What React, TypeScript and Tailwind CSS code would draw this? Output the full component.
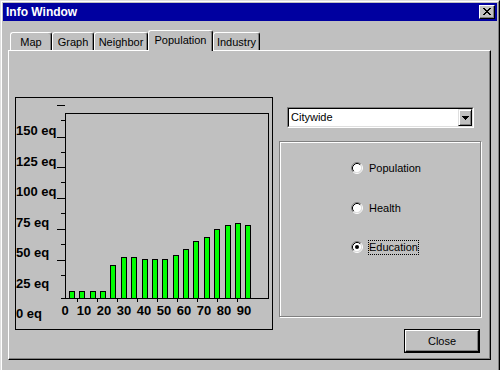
import React from 'react';

const tabs = [
  { label: 'Map', w: 'w-[42px]', active: false },
  { label: 'Graph', w: 'w-[42px]', active: false },
  { label: 'Neighbor', w: 'w-[54px]', active: false },
  { label: 'Population', w: 'w-[65px]', active: true },
  { label: 'Industry', w: 'w-[47px]', active: false },
];

// bar tops in screen px, bottom sits on the x axis at y=298
const bars = [291, 291, 291, 291, 265, 257, 257, 259, 259, 259, 255, 249, 241, 237, 229, 225, 223, 225];
const longTicks = [105, 137, 167, 198, 229, 260];
const shortTicks = [120, 152, 182, 213, 244, 275];
const yLabels = ['150 eq', '125 eq', '100 eq', '75 eq', '50 eq', '25 eq', '0 eq'];
const xLabels = ['0', '10', '20', '30', '40', '50', '60', '70', '80', '90'];
const xTicks = [77, 97, 117, 137, 157, 177, 197, 217, 237];

const CloseGlyph: React.FC = () => (
  <svg width="8" height="7" viewBox="0 0 8 7" shapeRendering="crispEdges">
    <path
      d="M0 0h2v1h-2zM6 0h2v1h-2zM1 1h2v1h-2zM5 1h2v1h-2zM2 2h4v1h-4zM3 3h2v1h-2zM2 4h4v1h-4zM1 5h2v1h-2zM5 5h2v1h-2zM0 6h2v1h-2zM6 6h2v1h-2z"
      fill="#000"
    />
  </svg>
);

const Radio: React.FC<{ checked?: boolean }> = ({ checked }) => (
  <svg width="12" height="12" viewBox="0 0 12 12" className="shrink-0">
    <circle cx="6" cy="6" r="4.5" fill="#fff" />
    <path d="M2.11 9.89A5.5 5.5 0 0 1 9.89 2.11" fill="none" stroke="#808080" />
    <path d="M9.89 2.11A5.5 5.5 0 0 1 2.11 9.89" fill="none" stroke="#fff" />
    <path d="M2.82 9.18A4.5 4.5 0 0 1 9.18 2.82" fill="none" stroke="#000" />
    <path d="M9.18 2.82A4.5 4.5 0 0 1 2.82 9.18" fill="none" stroke="#dfdfdf" />
    {checked && <circle cx="6" cy="6" r="2" fill="#000" />}
  </svg>
);

const Chart: React.FC = () => (
  <div className="w-[258px] h-[233px] border border-black shrink-0">
    <svg width={256} height={231} className="block">
      <g transform="translate(-16 -98)">
        <g shapeRendering="crispEdges" stroke="#000">
          <rect x={65.5} y={113.5} width={203} height={185} fill="none" />
          <line x1={61} y1={298.5} x2={66} y2={298.5} />
          {longTicks.map((y) => (
            <line key={y} x1={57} y1={y + 0.5} x2={65} y2={y + 0.5} />
          ))}
          {shortTicks.map((y) => (
            <line key={y} x1={61} y1={y + 0.5} x2={65} y2={y + 0.5} />
          ))}
          {xTicks.map((x) => (
            <line key={x} x1={x + 0.5} y1={299} x2={x + 0.5} y2={302} />
          ))}
          {bars.map((top, i) => {
            const x = Math.round(69 + i * 10.37);
            return (
              <rect key={i} x={x + 0.5} y={top + 0.5} width={5} height={298 - top} fill="#00ff00" />
            );
          })}
        </g>
        <g fontFamily="'Liberation Sans', Arial, sans-serif" fontWeight="bold" fontSize="13" fill="#000">
          {yLabels.map((t, k) => (
            <text key={t} x={16} y={135 + k * 30.5}>
              {t}
            </text>
          ))}
          {xLabels.map((t, k) => (
            <text key={t} x={k === 0 ? 65 : 84 + (k - 1) * 20} y={315} textAnchor="middle">
              {t}
            </text>
          ))}
        </g>
      </g>
    </svg>
  </div>
);

export default function App() {
  return (
    <div className="w-[500px] h-[370px] overflow-hidden font-['Liberation_Sans',Arial,sans-serif] text-[11px] text-black">
      <div className="w-[500px] h-[374px] bg-[#c0c0c0] border border-t-[#dfdfdf] border-l-[#dfdfdf] border-r-black border-b-black">
        <div className="h-full border border-t-white border-l-white border-r-[#808080] border-b-[#808080] p-px">
          {/* Title bar */}
          <div className="h-[18px] bg-[#0000a0] flex items-center justify-between pl-[3px] pr-[2px]">
            <span className="text-white font-bold text-[12px] leading-none">Info Window</span>
            <button className="w-[16px] h-[14px] bg-[#c0c0c0] border border-t-white border-l-white border-r-black border-b-black shadow-[inset_-1px_-1px_0_#808080] flex items-center justify-center pb-px">
              <CloseGlyph />
            </button>
          </div>

          <div className="pl-[5px] pt-[9px]">
            {/* Tabs */}
            <div className="relative z-10 flex items-end pl-[2px]">
              {tabs.map((t) =>
                t.active ? (
                  <div
                    key={t.label}
                    className={`${t.w} h-[21px] -mb-px bg-[#c0c0c0] border-t border-l border-r border-t-white border-l-white border-r-black rounded-tl-[3px] rounded-tr-[3px] shadow-[inset_-1px_0_0_#808080] text-center pt-[3px] leading-[13px]`}
                  >
                    {t.label}
                  </div>
                ) : (
                  <div
                    key={t.label}
                    className={`${t.w} h-[18px] border-t border-l border-r border-t-white border-l-white border-r-black rounded-tl-[3px] rounded-tr-[3px] shadow-[inset_-1px_0_0_#808080] text-center pt-[3px] leading-[13px]`}
                  >
                    {t.label}
                  </div>
                )
              )}
            </div>

            {/* Tab panel */}
            <div className="w-[483px] h-[310px] border border-t-white border-l-white border-r-black border-b-black shadow-[inset_-1px_-1px_0_#808080] flex pl-[6px] pt-[46px]">
              <Chart />

              <div className="ml-[6px] w-[203px] flex flex-col">
                {/* Combo box */}
                <div className="ml-[8px] mt-[10px] w-[187px] h-[21px] border border-t-[#808080] border-l-[#808080] border-r-white border-b-white">
                  <div className="h-full border border-t-black border-l-black border-r-[#dfdfdf] border-b-[#dfdfdf] bg-white flex items-center">
                    <span className="flex-1 pl-[2px] leading-[13px]">Citywide</span>
                    <div className="w-[14px] h-full bg-[#c0c0c0] border border-t-[#dfdfdf] border-l-[#dfdfdf] border-r-black border-b-black shadow-[inset_1px_1px_0_#fff,inset_-1px_-1px_0_#808080] flex items-center justify-center">
                      <svg width="7" height="4" viewBox="0 0 7 4" shapeRendering="crispEdges">
                        <path d="M0 0h7v1h-7zM1 1h5v1h-5zM2 2h3v1h-3zM3 3h1v1h-1z" fill="#000" />
                      </svg>
                    </div>
                  </div>
                </div>

                {/* Group box */}
                <div className="mt-[13px] w-[202px] h-[176px] border border-[#808080] shadow-[inset_1px_1px_0_#fff,1px_1px_0_#fff] flex flex-col pl-[71px] pt-[18px]">
                  <label className="h-[16px] flex items-center gap-[5px]">
                    <Radio />
                    <span className="border border-transparent leading-[13px]">Population</span>
                  </label>
                  <label className="mt-[24px] h-[16px] flex items-center gap-[5px]">
                    <Radio />
                    <span className="border border-transparent leading-[13px]">Health</span>
                  </label>
                  <label className="mt-[23px] h-[16px] flex items-center gap-[5px]">
                    <Radio checked />
                    <span className="border border-dotted border-black leading-[13px]">Education</span>
                  </label>
                </div>

                {/* Close button */}
                <button className="mt-[12px] ml-[125px] w-[76px] h-[24px] border border-black">
                  <div className="h-full border border-t-white border-l-white border-r-black border-b-black shadow-[inset_-1px_-1px_0_#808080] flex items-center justify-center leading-[13px]">
                    Close
                  </div>
                </button>
              </div>
            </div>
          </div>
        </div>
      </div>
    </div>
  );
}
